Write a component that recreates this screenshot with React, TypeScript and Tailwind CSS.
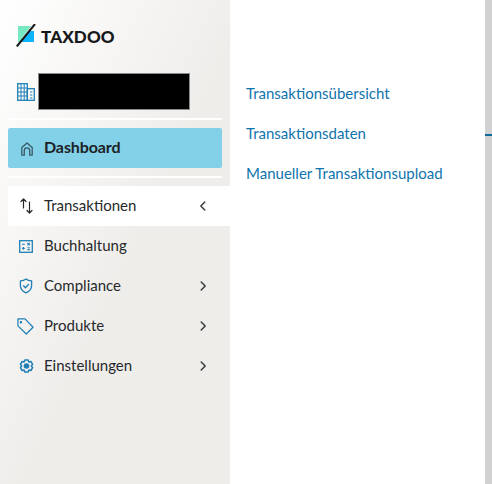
import React from "react";

const ink = "#26292b";
const blue = "#1f7fb5";

function Chevron({ left }: { left?: boolean }) {
  return (
    <svg width="12" height="12" viewBox="0 0 12 12" fill="none" stroke="#33373a" strokeWidth="1.4" strokeLinecap="round" strokeLinejoin="round">
      <path d={left ? "M7.8 2 3.8 6l4 4" : "M4.2 2l4 4-4 4"} />
    </svg>
  );
}

function Item({ label, icon, chevron, active }: { label: string; icon: React.ReactNode; chevron?: "left" | "right"; active?: boolean }) {
  return (
    <div className={active ? "flex h-10 items-center bg-white pl-[9px] pr-[21px]" : "mr-2 flex h-10 items-center pl-[9px] pr-[13px]"}>
      <div className="flex w-[27px] justify-start">{icon}</div>
      <span className="flex-1 pb-[2px] text-[15px] text-[#26292b]">{label}</span>
      {chevron && <Chevron left={chevron === "left"} />}
    </div>
  );
}

export default function App() {
  return (
    <div className="flex h-[484px] w-[492px] overflow-hidden bg-white font-['Lato','Liberation_Sans',sans-serif]">
      <aside className="flex h-full w-[230px] flex-col bg-gradient-to-br from-[#ffffff] to-[#efedea] to-[55%] pl-2">
        <div className="flex h-[73px] items-start pl-2 pt-6">
          <svg width="20" height="23" viewBox="0 0 20 23" className="shrink-0">
            <polygon points="2,2 15,2 3,18 2,18" fill="#76e8c2" />
            <polygon points="13,7 18,7 18,18 4,18" fill="#0cb4fb" />
            <path d="M19 0 0.800 22.500" stroke="#16181a" strokeWidth="2" />
          </svg>
          <span className="ml-[5px] mt-[4px] text-[17px] font-black leading-none tracking-[0.1px] text-[#16181a]">TAXDOO</span>
        </div>

        <div className="mr-2 flex h-[37px] items-center pl-[9px]">
          <svg width="18" height="18" viewBox="0 0 18 18" fill="none" stroke={blue} strokeWidth="1.3" className="shrink-0">
            <rect x="0.7" y="0.7" width="9.6" height="16.6" />
            <path d="M0.7 5h9.6M0.7 9h9.6M0.7 13h9.6M4 0.7v16.6M7.2 0.7v16.6" strokeWidth="1" />
            <rect x="10.3" y="5.7" width="7" height="11.6" />
            <path d="M13 9h2.4M13 12h2.4M13 15h2.4" strokeWidth="1.2" />
          </svg>
          <div className="ml-[3px] h-[37px] w-[152px] border border-[#8a8a8a] bg-black" />
        </div>

        <div className="mr-2 mt-2 h-[2px] bg-white" />

        <div className="mr-2 mt-2 flex h-10 items-center rounded-[2px] bg-[#83d1e8] pl-[13px]">
          <svg width="12" height="14" viewBox="0 0 12 14" fill="none" stroke="#3a5a66" strokeWidth="1.3" strokeLinejoin="round" className="mr-[11px] mt-[2px] shrink-0">
            <path d="M0.800 5.500 6 0.900l5.200 4.600v7.700H8.700V8.500a2.700 2.700 0 0 0-5.400 0v4.700H0.800z" />
          </svg>
          <span className="pb-[2px] text-[16px] font-bold tracking-[-0.1px] text-[#1c2225]">Dashboard</span>
        </div>

        <div className="mr-2 mt-2 h-[2px] bg-white" />

        <div className="mt-2 flex flex-col">
          <Item
            active
            label="Transaktionen"
            chevron="left"
            icon={
              <svg width="14" height="16" viewBox="0 0 14 16" fill="none" stroke={ink} strokeWidth="1.2" strokeLinecap="round" strokeLinejoin="round" className="ml-[3px]">
                <path d="M3.500 10V1M1 3.500l2.500-2.500L6 3.500M9.500 4v11M7 12.500l2.500 2.500 2.500-2.500" />
              </svg>
            }
          />
          <Item
            label="Buchhaltung"
            icon={
              <svg width="14" height="13" viewBox="0 0 14 13" fill="none" stroke={blue} strokeWidth="1.3" className="ml-[2px]">
                <rect x="0.700" y="0.700" width="12.600" height="11.600" />
                <path d="M3 4.200h2.800M8.400 2.800l2.400 2.600M10.800 2.800 8.400 5.400M3 8.400h2.800M4.400 7v2.800M8.400 7.800h2.400M8.400 9.600h2.400" strokeWidth="1.100" />
              </svg>
            }
          />
          <Item
            label="Compliance"
            chevron="right"
            icon={
              <svg width="14" height="16" viewBox="0 0 16 18" fill="none" stroke={blue} strokeWidth="1.500" strokeLinejoin="round" strokeLinecap="round" className="ml-[2px]">
                <path d="M8 1c2 1.500 4 2 6.400 2.200v5.600c0 3.800-2.600 6.400-6.400 8-3.800-1.600-6.400-4.200-6.400-8V3.200C4 3 6 2.500 8 1z" />
                <path d="M5.200 8.800 7.300 11l3.600-3.800" />
              </svg>
            }
          />
          <Item
            label="Produkte"
            chevron="right"
            icon={
              <svg width="17" height="17" viewBox="0 0 18 18" fill="none" stroke={blue} strokeWidth="1.300" strokeLinejoin="round">
                <path d="M1 1h7.500L17 9.800 9.800 17 1 8.300z" />
                <circle cx="4.200" cy="4.400" r="0.700" fill={blue} />
              </svg>
            }
          />
          <Item
            label="Einstellungen"
            chevron="right"
            icon={
              <svg width="15" height="16" viewBox="0 0 15 16" fill="none" stroke={blue} strokeWidth="1.500" strokeLinejoin="round" className="ml-[2px]">
                <path d="M5.800 1h3.400l.7 1.900 2-.4 1.700 2.900-1.300 1.600 1.300 1.600-1.700 2.900-2-.4-.7 1.900H5.800l-.7-1.900-2 .4-1.700-2.900L2.700 7 1.400 5.400l1.700-2.900 2 .4z" transform="translate(0 1)" />
                <circle cx="7.500" cy="8" r="2.800" fill={blue} stroke="none" />
              </svg>
            }
          />
        </div>
      </aside>

      <main className="flex flex-1 flex-col pl-4 pt-[73px]">
        <a className="flex h-10 items-center text-[15px] text-[#0f74ad]">Transaktionsübersicht</a>
        <a className="flex h-10 items-center text-[15px] text-[#0f74ad]">Transaktionsdaten</a>
        <a className="flex h-10 items-center text-[15px] text-[#0f74ad]">Manueller Transaktionsupload</a>
      </main>

      <div className="flex h-full w-[7px] shrink-0 flex-col bg-[#d1d1d1] pt-[134px]">
        <div className="h-[2px] bg-[#0f6a9c]" />
      </div>
    </div>
  );
}
